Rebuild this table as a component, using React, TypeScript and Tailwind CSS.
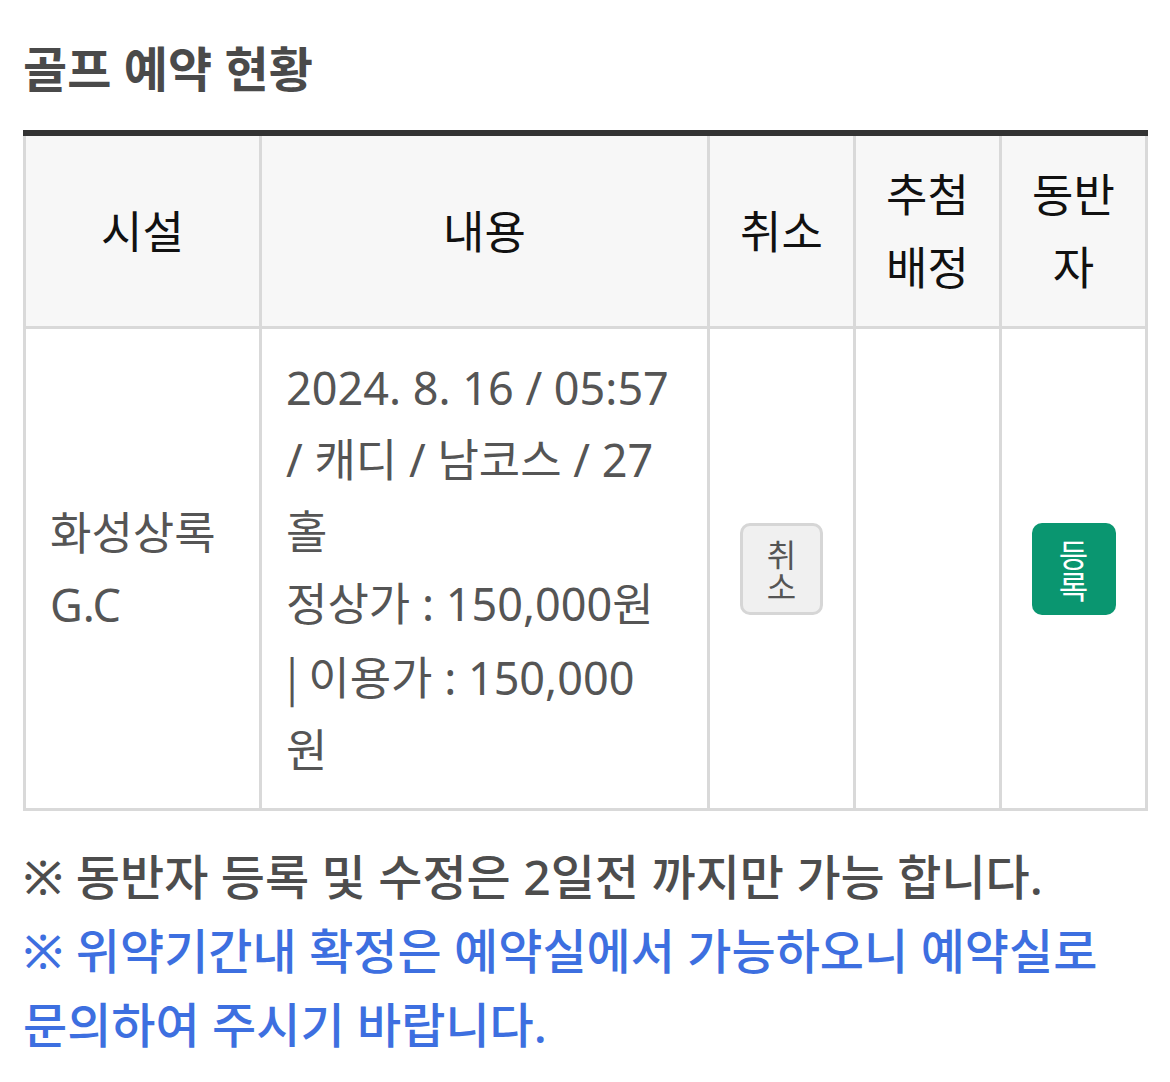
import React from "react";

const font = { fontFamily: '"Noto Sans", "Noto Sans CJK KR", sans-serif' };
const cjk = { fontFamily: '"Noto Sans CJK KR", sans-serif' };

export default function App() {
  return (
    <div className="bg-white w-[1170px] h-[1082px] pl-[23px] pr-[24px] pt-[38px]" style={font}>
      <h2 className="text-[48px] leading-[62px] font-bold text-[#4a4a4a] mb-[30px]">골프 예약 현황</h2>
      <table className="w-[1122px] border-collapse table-fixed border-t-[6px] border-t-[#333]">
        <colgroup>
          <col className="w-[236px]" />
          <col className="w-[448px]" />
          <col className="w-[146px]" />
          <col className="w-[146px]" />
          <col className="w-[146px]" />
        </colgroup>
        <thead>
          <tr className="bg-[#f7f7f7] text-[45px] leading-[73px] text-[#111] font-normal">
            <th className="border-[3px] border-[#d9d9d9] border-t-0 font-normal py-[22px] text-center">시설</th>
            <th className="border-[3px] border-[#d9d9d9] border-t-0 font-normal py-[22px] text-center">내용</th>
            <th className="border-[3px] border-[#d9d9d9] border-t-0 font-normal py-[22px] text-center">취소</th>
            <th className="border-[3px] border-[#d9d9d9] border-t-0 font-normal py-[22px] text-center">
              <span className="block">추첨</span>
              <span className="block">배정</span>
            </th>
            <th className="border-[3px] border-[#d9d9d9] border-t-0 font-normal py-[22px] text-center">
              <span className="block">동반</span>
              <span className="block">자</span>
            </th>
          </tr>
        </thead>
        <tbody>
          <tr className="text-[45px] leading-[72px] text-[#555]">
            <td className="border-[3px] border-[#d9d9d9] px-[24px] pt-[23px] pb-[22px] align-middle">
              <span className="block">화성상록</span>
              <span className="block">G.C</span>
            </td>
            <td className="border-[3px] border-[#d9d9d9] px-[24px] pt-[23px] pb-[22px] align-middle whitespace-nowrap">
              <span className="block">2024. 8. 16 / 05:57</span>
              <span className="block">/ 캐디 / 남코스 / 27</span>
              <span className="block">홀</span>
              <span className="block">정상가 : 150,000원</span>
              <span className="block"><span style={cjk}>| </span>이용가 : 150,000</span>
              <span className="block">원</span>
            </td>
            <td className="border-[3px] border-[#d9d9d9] align-middle">
              <button style={cjk} className="mx-auto flex flex-col items-center justify-center w-[83px] h-[92px] rounded-[10px] bg-[#f0f0f0] border-[3px] border-[#d6d6d6] text-[32px] leading-[32px] text-[#555]">
                <span>취</span>
                <span>소</span>
              </button>
            </td>
            <td className="border-[3px] border-[#d9d9d9] align-middle"></td>
            <td className="border-[3px] border-[#d9d9d9] align-middle">
              <button style={cjk} className="mx-auto flex flex-col items-center justify-center w-[84px] h-[92px] rounded-[10px] bg-[#0a9670] text-[32px] leading-[32px] text-white">
                <span>등</span>
                <span>록</span>
              </button>
            </td>
          </tr>
        </tbody>
      </table>
      <div className="mt-[29px] text-[48px] leading-[74px] font-medium">
        <p className="text-[#4d4d4d]">※ 동반자 등록 및 수정은 2일전 까지만 가능 합니다.</p>
        <p className="text-[#3d6fe0]">※ 위약기간내 확정은 예약실에서 가능하오니 예약실로 문의하여 주시기 바랍니다.</p>
      </div>
    </div>
  );
}
